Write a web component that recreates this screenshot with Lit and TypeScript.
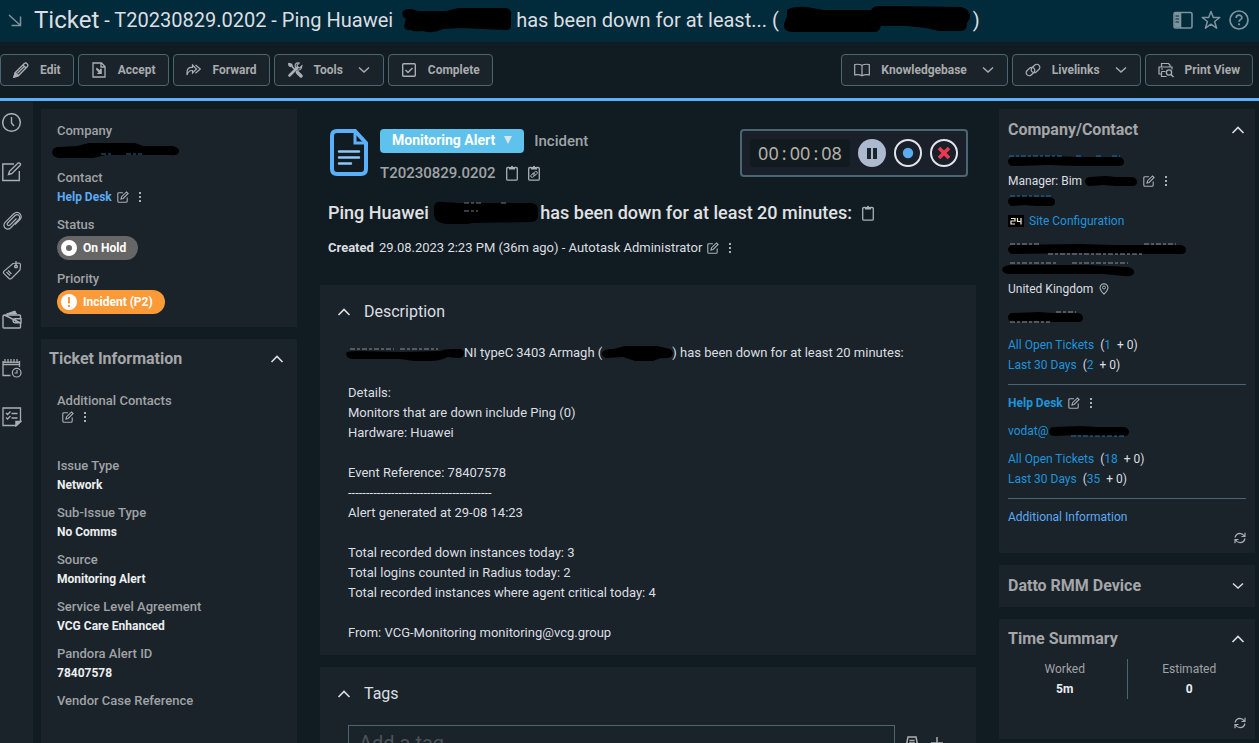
import { LitElement, html, svg, css, SVGTemplateResult, TemplateResult } from "lit";
import { customElement } from "lit/decorators.js";

/* Stroke-drawn icons, keyed by name: [width, height, content] */
const ICONS: Record<string, [number, number, SVGTemplateResult]> = {
  goto: [14, 14, svg`<path d="M1 2l11 10M12.5 3.500v9h-9"/>`],
  layout: [20, 18, svg`<rect x="1" y="1.500" width="18" height="15.500" rx="1.500" stroke-width="1.600"/><path d="M7.500 1.500v15.500" stroke-width="1.600"/><path d="M1.500 2h5.500v14.500H1.500z" fill="currentColor" stroke="none"/><path d="M2.500 5h3.500M2.500 8h3.500M2.500 11h3.500" stroke="#012a3a" stroke-width="1.200"/>`],
  star: [20, 20, svg`<path d="M10 1.500l2.300 6h6.500l-5.200 4 2 6.700L10 14.200l-5.600 4 2-6.700-5.200-4h6.500z" stroke-width="1.500" stroke-linejoin="round"/>`],
  help: [20, 20, svg`<circle cx="10" cy="10" r="9" stroke-width="1.700"/><path d="M7.200 8c0-3.800 5.700-3.500 5.700-.4 0 2-2.800 2.100-2.800 4.100" stroke-width="1.700"/><path d="M9.100 13.400h2v1.800h-2z" fill="currentColor" stroke="none"/>`],
  pencil: [16, 16, svg`<path d="M1 15l1.200-4.300L11.300 1.500q1.600-1.200 2.700.2 1.500 1.300.4 2.800L5.300 13.800zM2.500 10.700l3 3M10 3l3 3M4.500 11.200l6.500-6.500" stroke-width="1.300"/><path d="M1 15l1-3 2 2z" fill="currentColor"/>`],
  accept: [16, 16, svg`<path d="M2 1h8.500l3.500 3.500V15H2zM10 1v4h4" stroke-width="1.300"/><path d="M5.500 5.500l3.500 2.800V6.800h1.800v5.200H5.600l2-1.600-2.600-3z" fill="currentColor" stroke="none"/>`],
  forward: [16, 16, svg`<path d="M1 13V10.500Q1 5.300 5.500 5.300H6.500V3L10.500 7 6.500 11V8.500H5.500Q2.500 8.500 1 13zM9.500 3l4.800 4-4.800 4.300" stroke-width="1.200"/>`],
  tools: [16, 16, svg`<path d="M1.500 1.500l3 1 1 2.500L8 7.500M9.300 9l5 5" stroke-width="1.600"/><path d="M10.500 10.500l3.500 3.500" stroke-width="3.400" stroke-linecap="round"/><path d="M2.500 13.500L10.500 5.500" stroke-width="2.600" stroke-linecap="round"/><path d="M14.800 3.800l-2 2-2.200-.5-.5-2.200 2-2q-4-.8-4 3l1.800 3.800q4.800 1 4.900-4.100z" stroke-width="1.200"/><path d="M1 1l3 .8 1.200 2.500-1.800 1L1.500 4z" fill="currentColor" stroke="none"/>`],
  check: [16, 16, svg`<rect x="1.700" y="1.700" width="12.600" height="12.600" rx="1" stroke-width="1.400"/><path d="M4.500 8l2.500 2.500L11.500 6" stroke-width="1.500"/>`],
  book: [16, 16, svg`<path d="M8 3.200q-3-1.400-7.300-.7v10.300q4.300-.7 7.300.9 3-1.600 7.300-.9V2.500Q11 1.800 8 3.200zM8 3.200v10.500" stroke-width="1.200"/>`],
  link: [16, 16, svg`<rect x="-4.800" y="-3" width="9.600" height="6" rx="3" transform="translate(5.500 9.500) rotate(-42)" stroke-width="1.200"/><rect x="-4.800" y="-3" width="9.600" height="6" rx="3" transform="translate(10.500 6.500) rotate(-42)" stroke-width="1.200"/>`],
  print: [16, 16, svg`<path d="M3.500 5V1.500h7L12 3v2M3 12H1V5h13v2.500M3.500 9.500h4M3.500 9.500v5h5M3 7h2" stroke-width="1.200"/><circle cx="11" cy="10.500" r="2.600" stroke-width="1.300"/><path d="M13 12.500l2.500 2.500" stroke-width="1.500"/>`],
  down: [14, 8, svg`<path d="M2 1.500l5 4.500 5-4.500" stroke-width="1.400"/>`],
  up: [14, 8, svg`<path d="M1.500 7L7 1.500 12.500 7" stroke-width="1.600"/>`],
  clock: [20, 20, svg`<circle cx="9.500" cy="9.500" r="8.800"/><path d="M9.500 4v6l2.500 3" stroke-width="1.400"/>`],
  note: [20, 20, svg`<path d="M12 2H.8v16.500h16.500V9M6.500 12.500l1-3.200L16 1q1.500-.5 2.300.7.500 1-.3 1.800L10 11.500zM6.500 12.500l3.500-1" stroke-width="1.400"/>`],
  clip: [20, 20, svg`<path d="M14.500 7.500L8 14q-1.500 1-2.300.2-1-1 0-2.200L13 4.500q2-1.700 3.800-.2 1.800 2 0 4L8.500 17q-2.600 2.200-5.300 0-2.400-2.600-.3-5.400L11.500 3q3.500-3 6.500-.2 2.200 2.800.4 5.200L13 13.500" stroke-width="1.200"/>`],
  tag: [20, 20, svg`<path d="M11 3.500L17 3q1.500.3 1.500 1.800L18 10l-8.500 8.500q-1.500.9-2.500 0L1.800 13.300q-.8-1 0-2zM6 10.500l3.500 3.500M4.500 12l3.500 3.500" stroke-width="1.200"/><circle cx="14" cy="6.500" r="1.300"/><path d="M14 6V1" stroke-width="1.200"/>`],
  wallet: [20, 20, svg`<path d="M2.500 6h15q1 0 1 1v3M18.500 14v4q0 1-1 1H2q-1 0-1-1V7.500Q1 6 2.500 6zM13 9.800h6v4h-6q-2-.2-2-2t2-2z" stroke-width="1.400"/><circle cx="13.700" cy="11.800" r=".7" stroke-width="1"/><path d="M4.500 5L13 2l1.500 3z" fill="currentColor" stroke-width="1"/>`],
  calendar: [20, 20, svg`<path d="M8.500 17.500H1V3M17.500 3v6M1 6.500h16.500" stroke-width="1.300"/><path d="M1 4.200h16.500" stroke-width="1.300"/><path d="M3 1v4M6 1v4M9 1v4M12 1v4M15 1v4" stroke-width="1.200"/><circle cx="14.700" cy="14.700" r="4.300" stroke-width="1.200"/><path d="M15 12v3h-2.500" stroke-width="1.200"/>`],
  list: [20, 20, svg`<path d="M1 1h17.500v13.500l-4 4H1zM9.500 6.500h6M9.500 11h6M4 6l1.500 1.500L8.500 4.500M4 10.500L5.500 12l3-3" stroke-width="1.300"/><path d="M14 18.500v-4h4.500z" fill="currentColor"/>`],
  edit: [12, 12, svg`<path d="M6 1.700H2q-1.200 0-1.200 1.200v7q0 1.300 1.200 1.300h7q1.200 0 1.200-1.300V6.500M4 8l.6-2.300L9.500.9l1.600 1.600-4.900 5z" stroke-width="1.100"/>`],
  dots: [4, 12, svg`<path d="M1 1h2v2H1zM1 5h2v2H1zM1 9h2v2H1z" fill="currentColor" stroke="none"/>`],
  board: [12, 16, svg`<path d="M3.500 2.500H2q-1.300 0-1.300 1.200V14q0 1.200 1.300 1.200h8q1.300 0 1.300-1.200V3.700q0-1.200-1.300-1.200H8.500" stroke-width="1.300"/><path d="M3 4.500V2h1.800q1.200-2.500 2.400 0H9v2.500z" fill="currentColor" stroke="none"/>`],
  boardlink: [12, 16, svg`<path d="M3.500 2.500H2q-1.300 0-1.300 1.200V14q0 1.200 1.300 1.200h8q1.300 0 1.300-1.200V3.700q0-1.200-1.300-1.200H8.500" stroke-width="1.300"/><path d="M3 4.500V2h1.800q1.200-2.500 2.400 0H9v2.500z" fill="currentColor" stroke="none"/><ellipse cx="4.900" cy="10.300" rx="2.500" ry="1.500" transform="rotate(-42 4.900 10.300)" stroke-width=".9"/><ellipse cx="7.200" cy="8.500" rx="2.500" ry="1.500" transform="rotate(-42 7.200 8.500)" stroke-width=".9"/>`],
  refresh: [12, 12, svg`<path d="M1 5.500Q2 1.500 6 1.300q3 .2 4.500 3M11 .8v3.700H7.500M11 6.500q-1 4-5 4.200-3-.2-4.500-3M1 11.200V7.500h3.500" stroke-width="1.200"/>`],
  pin: [10, 12, svg`<path d="M5 11.200Q1 7 1 4.500 1.500 1 5 .8 8.500 1 9 4.500 9 7 5 11.200z" stroke-width="1.100"/><circle cx="5" cy="4.500" r="1.500" stroke-width="1"/>`],
  doc: [38, 47, svg`<path d="M7 2h18l11 12v26q0 5-5 5H7q-5 0-5-5V7q0-5 5-5z" stroke-width="4"/><path d="M25 2v12h11" stroke-width="3"/><path d="M9 22.500h20M9 28.500h20M9 34.500h12" stroke-width="2.400" stroke="#8fc8f8" stroke-linecap="round"/>`],
  box: [14, 14, svg`<path d="M3 1h8l2 10H1zM4.500 4.500h5M4 7h6" stroke-width="1.500"/>`],
  plus: [12, 12, svg`<path d="M6 0v12M0 6h12" stroke-width="1.500"/>`],
};

const icon = (name: string, label = "") => {
  const [w, h, body] = ICONS[name];
  return html`<svg class="icon" width=${w} height=${h} viewBox="0 0 ${w} ${h}" role="img" aria-label=${label || name}>${body}</svg>`;
};

/* Marker scribble that hides private text; fringe draws the specks left visible at its edge */
const blot = (w: number, h: number, d: string, fringe = "", tone = "#9fb4c0") =>
  html`<svg class="blot" width=${w} height=${h} viewBox="0 0 ${w} ${h}" aria-hidden="true">
    <path d=${d} fill="#000"/><path d=${fringe} stroke=${tone} stroke-width="1" stroke-dasharray="5 2 3 2" fill="none"/></svg>`;

const bar = (w: number) =>
  `M0 5Q1 1 5 1L${w * 0.4} 0L${w * 0.6} 1L${w - 5} 1Q${w} 2 ${w} 6Q${w} 10 ${w - 5} 10L${w * 0.6} 10L${w * 0.35} 9L4 10Q0 9 0 5z`;

@customElement("app-root")
export class AppRoot extends LitElement {
  static styles = css`
    :host {
      display: flex; flex-direction: column; height: 100vh; overflow: hidden;
      background: #111c22; color: #dcdfe1;
      font: 400 13px/20px Roboto, "Open Sans", sans-serif;
    }
    * { box-sizing: border-box; }
    h1, h2, h3, p, dl, dd, dt { margin: 0; font: inherit; }
    button { font: inherit; color: inherit; background: none; border: 0; padding: 0; display: flex; align-items: center; }
    a { color: #5cabf3; text-decoration: none; }
    .icon { display: block; flex: none; fill: none; stroke: currentColor; stroke-width: 1.500; color: #a9b0b5; }
    .blot { flex: none; display: block; overflow: visible; }
    .title { flex: none; height: 42px; background: #012a3a; display: flex; align-items: center; padding: 0 10px 2px 8px; }
    .title h1 { display: flex; align-items: center; flex: 1; margin-left: 12px; font-size: 20px; line-height: 40px; white-space: pre; }
    .title h1 .blot { margin: 0 4px; }
    .title strong { font-weight: 400; font-size: 24px; }
    .title .icon { color: #7d939d; }
    .title nav { display: flex; gap: 8px; align-items: center; }
    .tools { flex: none; height: 59px; border-bottom: 3px solid #5bb1f9; display: flex; align-items: center; gap: 4px; padding-right: 6px; }
    .tools button {
      height: 32px; border: 1px solid #4b6673; border-radius: 4px; background: #1a222a;
      padding: 0 12px; gap: 11px; font-weight: 700; font-size: 12px; color: #a9abad;
    }
    .tools button .icon ~ .icon { margin-left: 3px; }
    .spring { flex: 1; }
    .main { flex: 1; min-height: 0; display: grid; grid-template-columns: 33px 256px minmax(0, 1fr) 256px; padding-right: 4px; }
    .rail { background: #1a222a; padding: 12px 2px; display: flex; flex-direction: column; gap: 29px; }
    .side { margin: 8px -8px 0 8px; display: flex; flex-direction: column; gap: 12px; min-height: 0; }
    .right { margin: 8px 0 0; }
    .card { flex: none; background: #1a222a; }
    .summary { padding: 12px 16px 13px; }
    .head { display: flex; align-items: center; justify-content: space-between; font-weight: 700; font-size: 16px; color: #a4a6a8; height: 40px; padding: 0 13px 0 8px; }
    .head .icon, .chead .icon { color: #dcdfe1; }
    .fields { display: flex; flex-direction: column; gap: 9px; }
    .info { padding: 12px 16px 60px; }
    dt { color: #a0a3a5; font-size: 13px; font-weight: 500; line-height: 20px; }
    dd { height: 18px; line-height: 18px; font-size: 12px; font-weight: 700; color: #eceeef; display: flex; align-items: center; }
    .named { gap: 5px; }
    .acts { display: flex; gap: 9px; align-items: center; }
    dd.blank { height: 36px; align-items: flex-start; padding-left: 5px; }
    dd.chip { height: 25px; padding-top: 1px; }
    .pill { display: flex; align-items: center; gap: 6px; height: 24px; border-radius: 12px; padding: 0 12px 0 4px; background: #666; color: #fff; font-size: 12px; }
    .pill.warn { background: #fd9a38; }
    .pill svg { display: block; }
    .centre { margin: 0 23px 0 31px; display: flex; flex-direction: column; min-height: 0; }
    .top { flex: none; display: flex; padding: 28px 8px 0 10px; align-items: flex-start; }
    .top > .icon { color: #5bb1f9; margin-right: 12px; }
    .ident { flex: 1; font-weight: 500; font-size: 15px; color: #a0a3a5; display: grid; gap: 8px; }
    .row { display: flex; align-items: center; gap: 10px; height: 24px; }
    .kind { height: 24px; border-radius: 4px; background: #5ec2ed; color: #fff; font-weight: 700; font-size: 14px; padding: 0 12px 2px; gap: 9px; }
    .tri { width: 0; border: 4px solid transparent; border-top: 8px solid #dbe6ea; border-bottom: 0; }
    .timer { display: flex; gap: 8px; padding: 8px; border: 2px solid #4b6673; border-radius: 4px; background: #1a2029; }
    .time { display: flex; justify-content: center; width: 100px; height: 28px; border-radius: 4px; background: #111a1f; font: 400 18px/28px "Noto Sans", sans-serif; color: #b5b0a8; }
    .colon { width: 11px; text-align: center; }
    .timer svg { display: block; }
    .subject { flex: none; display: flex; align-items: center; margin: 16px 8px 0; height: 24px; font-weight: 500; font-size: 18px; color: #e0e2e4; white-space: pre; }
    .subject .icon { margin-left: 10px; }
    .created { flex: none; display: flex; align-items: center; margin: 13px 8px 0; white-space: pre; }
    .created b { font-weight: 700; margin-right: 5px; }
    .created .acts { margin-left: 5px; }
    .desc { margin-top: 27px; padding: 0 28px 12px; }
    .chead { display: flex; align-items: center; gap: 13px; height: 53px; margin-left: -11px; font-size: 16px; }
    .lines { margin-top: 5px; }
    .lines p { height: 20px; display: flex; align-items: center; white-space: pre; }
    .tags { margin-top: 12px; padding: 0 28px; height: 110px; }
    .entry { display: flex; align-items: center; gap: 12px; margin: 5px 5px 0 0; }
    .entry input { flex: 1; min-width: 0; height: 36px; margin-right: -2px; background: none; border: 1px solid #4b6673; padding: 0 10px; font: 400 20px Roboto, sans-serif; color: #dcdfe1; }
    .entry input::placeholder { color: #4d5357; opacity: 1; }
    .right .head { padding: 0 10px 0 9px; height: 42px; }
    .cc { padding: 0 9px; font-size: 12px; height: 402px; display: flex; flex-direction: column; }
    .cc p { display: flex; align-items: center; height: 20px; flex: none; white-space: pre; }
    .cc a { color: #1e94dc; }
    .cc a.more { color: #5cabf3; }
    .block { padding-bottom: 8px; }
    .rule { border: 0; border-top: 1px solid #4b6673; margin: 1px 0 8px; width: 100%; }
    .refresh { display: flex; justify-content: flex-end; margin-top: 5px; }
    .times { display: flex; text-align: center; padding: 0 4px; font-size: 12px; }
    .times div { flex: 1; color: #a0a3a5; }
    .times div + div { border-left: 1px solid #4b6673; }
    .times b { display: block; color: #eceeef; }
    .sum { height: 120px; padding-bottom: 10px; display: flex; flex-direction: column; }
    .sum .refresh { margin: 18px 9px 0; }
  `;

  private tool(name: string, text: string, menu = false) {
    return html`<button>${icon(name)}${text}${menu ? icon("down", "open menu") : ""}</button>`;
  }

  private acts() {
    return html`<span class="acts"><button aria-label="Edit">${icon("edit")}</button><button aria-label="More">${icon("dots")}</button></span>`;
  }

  private field(label: string, value: string | TemplateResult) {
    return html`<div><dt>${label}</dt><dd>${value}</dd></div>`;
  }

  private counts(open: string, recent: string) {
    return html`<div class="block">
      <p><a href="#">All Open Tickets</a>  (<a href="#">${open}</a>  + 0)</p>
      <p><a href="#">Last 30 Days</a>  (<a href="#">${recent}</a>  + 0)</p></div>`;
  }

  render() {
    return html`
      <header class="title">
        ${icon("goto")}
        <h1><strong>Ticket</strong> - T20230829.0202 - Ping Huawei ${blot(110, 24,
          "M1 3Q6-1 16 3L44 3 56 0H104Q110 1 109 8V17Q109 23 102 22L60 20 41 21Q32 26 20 23 11 24 9 22 3 23 2 18L4 11Q-1 8 1 3z")}has been down for at least... (${blot(186, 28,
          "M4 4Q10 0 24 1L40 4H88Q90 0 96 0H114L178 1Q189 4 187 12L184 17Q184 25 178 25H156L143 22 124 20H98Q96 27 90 26H10Q0 26 1 18L4 10z")})</h1>
        <nav>
          <button aria-label="Layout">${icon("layout")}</button>
          <button aria-label="Favourite">${icon("star")}</button>
          <button aria-label="Help">${icon("help")}</button>
        </nav>
      </header>
      <div class="tools">
        ${this.tool("pencil", "Edit")}${this.tool("accept", "Accept")}${this.tool("forward", "Forward")}
        ${this.tool("tools", "Tools", true)}${this.tool("check", "Complete")}
        <span class="spring"></span>
        ${this.tool("book", "Knowledgebase", true)}${this.tool("link", "Livelinks", true)}${this.tool("print", "Print View")}
      </div>
      <div class="main">
        <nav class="rail">
          ${["clock", "note", "clip", "tag", "wallet", "calendar", "list"].map(n => html`<button aria-label=${n}>${icon(n)}</button>`)}
        </nav>
        <aside class="side">
          <section class="card summary"><dl class="fields">
            ${this.field("Company", blot(120, 14, "M-5 9Q-4 4 2 4L20 3 32 0H78L86 3H116Q123 5 122 9 120 13 114 12H48L36 15H2Q-5 14-5 9z", "M44 11h10M69 11h16", "#2f5d85"))}
            <div><dt>Contact</dt><dd class="named"><a href="#">Help Desk</a>${this.acts()}</dd></div>
            <div><dt>Status</dt><dd class="chip"><span class="pill"><svg width="16" height="16"><circle cx="8" cy="8" r="5.500" fill="none" stroke="#fff" stroke-width="5"/></svg>On Hold</span></dd></div>
            <div><dt>Priority</dt><dd class="chip"><span class="pill warn"><svg width="16" height="16"><circle cx="8" cy="8" r="8" fill="#fff"/><path d="M7 3h2v6.500H7zM7 11h2v2H7z" fill="#fd9a38"/></svg>Incident (P2)</span></dd></div>
          </dl></section>
          <section class="card">
            <h2 class="head">Ticket Information<button aria-label="Collapse">${icon("up")}</button></h2>
            <dl class="fields info">
              <div><dt>Additional Contacts</dt><dd class="blank">${this.acts()}</dd></div>
              ${this.field("Issue Type", "Network")}${this.field("Sub-Issue Type", "No Comms")}
              ${this.field("Source", "Monitoring Alert")}${this.field("Service Level Agreement", "VCG Care Enhanced")}
              ${this.field("Pandora Alert ID", "78407578")}${this.field("Vendor Case Reference", "")}
            </dl>
          </section>
        </aside>
        <main class="centre">
          <div class="top">
            ${icon("doc", "Ticket")}
            <div class="ident">
              <div class="row"><button class="kind">Monitoring Alert<span class="tri"></span></button><span>Incident</span></div>
              <div class="row"><span>T20230829.0202</span><button aria-label="Copy number">${icon("board")}</button><button aria-label="Copy link">${icon("boardlink")}</button></div>
            </div>
            <div class="timer">
              <div class="time"><span>00</span><span class="colon">:</span><span>00</span><span class="colon">:</span><span>08</span></div>
              <button aria-label="Pause"><svg width="28" height="28"><circle cx="14" cy="14" r="14" fill="#adb9cf"/><path d="M9 9h4v11H9zM15 9h4v11h-4z" fill="#1c242c"/></svg></button>
              <button aria-label="Record"><svg width="28" height="28"><circle cx="14" cy="14" r="13" fill="none" stroke="#e3e4ec" stroke-width="2"/><circle cx="14" cy="14" r="5.200" fill="#5caaf2"/></svg></button>
              <button aria-label="Stop"><svg width="28" height="28"><circle cx="14" cy="14" r="13" fill="none" stroke="#e3e4ec" stroke-width="2"/><path d="M9 9l10 10M19 9L9 19" stroke="#ea3a50" stroke-width="3.600"/></svg></button>
            </div>
          </div>
          <h2 class="subject">Ping Huawei ${blot(107, 24,
            "M1 5Q3 0 9 1L27 2H99Q106 4 105 10V16Q104 21 97 21L39 22 35 23H13Q2 22 1 14z", "M31 10h14M31 2h18M68 2h6", "#70777b")}has been down for at least 20 minutes:<button aria-label="Copy title">${icon("board")}</button></h2>
          <p class="created"><b>Created</b>29.08.2023 2:23 PM (36m ago) - Autotask Administrator${this.acts()}</p>
          <section class="card desc">
            <h3 class="chead"><button aria-label="Collapse">${icon("up")}</button>Description</h3>
            <div class="lines">
              <p>${blot(116, 14, "M-2 7Q0 5 8 5L54 6 92 5Q96 3 104 3H112Q117 4 116 8 115 12 110 12L100 11Q92 15 82 15H66L52 13H4Q-2 12-2 7z", "M2 3h44M52 3h38", "#8a9196")}NI typeC 3403 Armagh (${blot(70, 16, "M0 8Q1 4 11 4L23 1H55L68 4Q72 7 70 11 67 14 59 13L51 16H33L21 12 5 13Q-1 12 0 8z")}) has been down for at least 20 minutes:</p>
              ${["", "Details:", "Monitors that are down include Ping (0)", "Hardware: Huawei", "", "Event Reference: 78407578", "----------------------------------------",
                "Alert generated at 29-08 14:23", "", "Total recorded down instances today: 3", "Total logins counted in Radius today: 2",
                "Total recorded instances where agent critical today: 4", "", "From: VCG-Monitoring monitoring@vcg.group"].map(t => html`<p>${t}</p>`)}
            </div>
          </section>
          <section class="card tags">
            <h3 class="chead"><button aria-label="Collapse">${icon("up")}</button>Tags</h3>
            <div class="entry"><input aria-label="Tags" placeholder="Add a tag"><button aria-label="Browse tags">${icon("box")}</button><button aria-label="New tag">${icon("plus")}</button></div>
          </section>
        </main>
        <aside class="side right">
          <section class="card">
            <h2 class="head">Company/Contact<button aria-label="Collapse">${icon("up")}</button></h2>
            <div class="cc">
              <div class="block">
                <p>${blot(116, 10, bar(116), "M1 0h54M68 0h6M88 0h6M104 0h8", "#1f6fa8")}</p>
                <p>Manager: Bim ${blot(52, 10, bar(52))}<span>  </span>${this.acts()}</p>
                <p>${blot(47, 10, bar(47), "M2 0h42", "#1f6fa8")}</p>
                <p class="named"><svg width="16" height="12"><path d="M0 0h16v12H0z" fill="#000"/><path d="M3 3.500h4V6H3v3h4M9.500 3v3.500h4M13 3v6.500" fill="none" stroke="#f5ecd0" stroke-width="1.200"/></svg><a href="#">Site Configuration</a></p>
              </div>
              <div class="block">
                <p>${blot(178, 10, bar(178), "M2 0h30M136 0h32M40 10h96", "#8a9196")}</p>
                <p>${blot(126, 10, "M-6 5Q-4 1 4 1H80L120 3Q127 5 126 9 124 13 116 12L96 10H0Q-6 9-6 5z", "M2-1h46M64-1h56", "#8a9196")}</p>
                <p>United Kingdom  ${icon("pin", "Map")}</p>
              </div>
              <div class="block"><p>${blot(75, 10, bar(75), "M48 0h20M2 10h40", "#8a9196")}</p></div>
              ${this.counts("1", "2")}
              <hr class="rule">
              <div class="block"><p class="named"><a href="#"><b>Help Desk</b></a>${this.acts()}</p></div>
              <div class="block"><p><a href="#">vodat@</a>${blot(80, 10, bar(80), "M22 10h54", "#1f6fa8")}</p></div>
              ${this.counts("18", "35")}
              <hr class="rule">
              <p><a class="more" href="#">Additional Information</a></p>
              <div class="refresh"><button aria-label="Refresh">${icon("refresh")}</button></div>
            </div>
          </section>
          <section class="card"><h2 class="head">Datto RMM Device<button aria-label="Expand">${icon("down")}</button></h2></section>
          <section class="card sum">
            <h2 class="head">Time Summary<button aria-label="Collapse">${icon("up")}</button></h2>
            <div class="times"><div>Worked<b>5m</b></div><div>Estimated<b>0</b></div></div>
            <div class="refresh"><button aria-label="Refresh">${icon("refresh")}</button></div>
          </section>
        </aside>
      </div>`;
  }
}
